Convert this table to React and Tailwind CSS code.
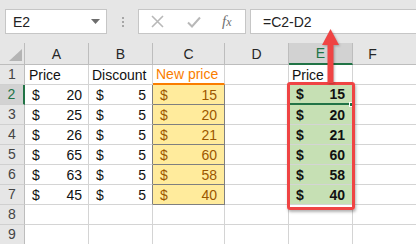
import React from 'react';

const rows = [
  [20, 5, 15],
  [25, 5, 20],
  [26, 5, 21],
  [65, 5, 60],
  [63, 5, 58],
  [45, 5, 40],
];

const Money = ({ value, className = '' }) => (
  <div className={`flex h-full items-end justify-between pl-[7px] pr-[6px] ${className}`}>
    <span>$</span>
    <span>{value}</span>
  </div>
);

const RowHead = ({ n, active }) => (
  <div
    className={`w-[25px] h-full flex items-end justify-center pb-[1px] border-b border-[#d0d0d0] ${
      active
        ? 'bg-[#d2d2d2] text-[#217346] border-r-2 border-r-[#217346]'
        : 'bg-[#e6e6e6] text-[#444] border-r border-r-[#bdbdbd]'
    }`}
  >
    {n}
  </div>
);

const App = () => {
  return (
    <div className="relative w-[416px] h-[244px] overflow-hidden bg-white font-['Liberation_Sans',Arial,sans-serif] text-[14px] leading-[18px] text-[#111]">
      {/* formula bar */}
      <div className="h-[43px] bg-[#e6e6e6] flex items-start pt-[9px]">
        <div className="ml-[5px] w-[102px] h-[25px] bg-white border border-[#c6c6c6] flex items-center pl-[7px] pr-[6px] justify-between text-[#222]">
          <span>E2</span>
          <svg width="9" height="5" viewBox="0 0 9 5"><polygon points="0,0 9,0 4.5,5" fill="#6d6d6d" /></svg>
        </div>
        <div className="w-[31px] h-[25px] flex flex-col items-center justify-center gap-[2px]">
          <div className="w-[2px] h-[2px] bg-[#a6a6a6]" />
          <div className="w-[2px] h-[2px] bg-[#a6a6a6]" />
          <div className="w-[2px] h-[2px] bg-[#a6a6a6]" />
        </div>
        <div className="w-[108px] h-[25px] bg-white border border-[#c6c6c6] flex items-center">
          <svg className="ml-[12px]" width="13" height="13" viewBox="0 0 13 13">
            <path d="M1 1 L12 12 M12 1 L1 12" stroke="#b8b8b8" strokeWidth="1.6" />
          </svg>
          <svg className="ml-[23px]" width="14" height="12" viewBox="0 0 14 12">
            <path d="M1 6.5 L5 10.5 L13 1.5" stroke="#b8b8b8" strokeWidth="2" fill="none" />
          </svg>
          <span className="ml-[21px] font-['Liberation_Serif',serif] italic text-[15px] text-[#707070]">
            f<span className="text-[12px]">x</span>
          </span>
        </div>
        <div className="ml-[4px] flex-1 -mr-[4px] h-[25px] bg-white border border-[#c6c6c6] flex items-center pl-[12px] text-[#222]">
          =C2-D2
        </div>
      </div>

      {/* column headers */}
      <div className="flex h-[22px] bg-[#e6e6e6] border-b border-[#bdbdbd] text-[#262626]">
        <div className="w-[25px] h-full border-r border-[#bdbdbd] flex items-end justify-end pr-[2px] pb-[3px]">
          <svg width="13" height="12" viewBox="0 0 13 12"><polygon points="13,0 13,12 0,12" fill="#b4b4b4" /></svg>
        </div>
        <div className="w-[64px] border-r border-[#bdbdbd] flex items-center justify-center">A</div>
        <div className="w-[64px] border-r border-[#bdbdbd] flex items-center justify-center">B</div>
        <div className="w-[72px] border-r border-[#bdbdbd] flex items-center justify-center">C</div>
        <div className="w-[64px] border-r border-[#bdbdbd] flex items-center justify-center">D</div>
        <div className="w-[64px] -mb-[1px] bg-[#d2d2d2] border-r border-[#bdbdbd] border-b-2 border-b-[#217346] text-[#217346] flex items-center justify-center">E</div>
        <div className="flex-1 flex items-center justify-center pr-[24px]">F</div>
      </div>

      {/* row 1 */}
      <div className="flex h-[20px]">
        <RowHead n={1} />
        <div className="w-[64px] border-r border-b border-[#d4d4d4] pl-[4px] flex items-end">Price</div>
        <div className="w-[64px] border-r border-b border-[#d4d4d4] pl-[3px] flex items-end">Discount</div>
        <div className="w-[72px] border-r border-[#d4d4d4] border-b-2 border-b-[#fa7d00] pl-[3px] flex items-end text-[#fa7d00]">New price</div>
        <div className="w-[64px] border-r border-b border-[#d4d4d4]" />
        <div className="w-[64px] border-r border-b border-[#d4d4d4] pl-[3px] flex items-end">Price</div>
        <div className="flex-1 border-b border-[#d4d4d4]" />
      </div>

      {rows.map(([a, b, c], i) => (
        <div key={i} className="flex h-[20px]">
          <RowHead n={i + 2} active={i === 0} />
          <div className="w-[64px] border-r border-b border-[#d4d4d4]">
            <Money value={a} />
          </div>
          <div className="w-[64px] border-r border-b border-r-[#7f7f7f] border-b-[#d4d4d4]">
            <Money value={b} />
          </div>
          <div className="w-[72px] bg-[#ffeb9c] border-r border-b border-[#7f7f7f] text-[#9c5700]">
            <Money value={c} className="pr-[7px]" />
          </div>
          <div className="w-[64px] border-r border-b border-[#d4d4d4]" />
          <div
            className={`w-[64px] bg-[#c6e0b4] font-bold border-r border-r-[#d4d4d4] ${
              i === 0 ? 'border-b-2 border-b-[#217346]' : 'border-b border-b-[#d4d4d4]'
            }`}
          >
            <Money value={c} className="pr-[7px]" />
          </div>
          <div className="flex-1 border-b border-[#d4d4d4]" />
        </div>
      ))}

      {[8, 9].map((n) => (
        <div key={n} className="flex h-[20px]">
          <RowHead n={n} />
          <div className="w-[64px] border-r border-b border-[#d4d4d4]" />
          <div className="w-[64px] border-r border-b border-[#d4d4d4]" />
          <div className="w-[72px] border-r border-b border-[#d4d4d4]" />
          <div className="w-[64px] border-r border-b border-[#d4d4d4]" />
          <div className="w-[64px] border-r border-b border-[#d4d4d4]" />
          <div className="flex-1 border-b border-[#d4d4d4]" />
        </div>
      ))}

      {/* fill handle */}
      <div className="absolute left-[349px] top-[102px] w-[5px] h-[5px] bg-[#217346] border border-white" />

      {/* red highlight */}
      <div className="absolute left-[287px] top-[82px] w-[68px] h-[128px] border-[3px] border-[#ef4444] rounded-[3px] shadow-[1px_2px_3px_rgba(0,0,0,0.3)]" />

      {/* arrow */}
      <svg className="absolute left-[322px] top-[29px] drop-shadow-[1px_1px_1px_rgba(0,0,0,0.25)]" width="17" height="54" viewBox="0 0 17 54">
        <polygon points="8.5,0 0,16 17,16" fill="#ef4444" />
        <rect x="5.5" y="14" width="6" height="40" fill="#ef4444" />
      </svg>
    </div>
  );
};

export default App;
